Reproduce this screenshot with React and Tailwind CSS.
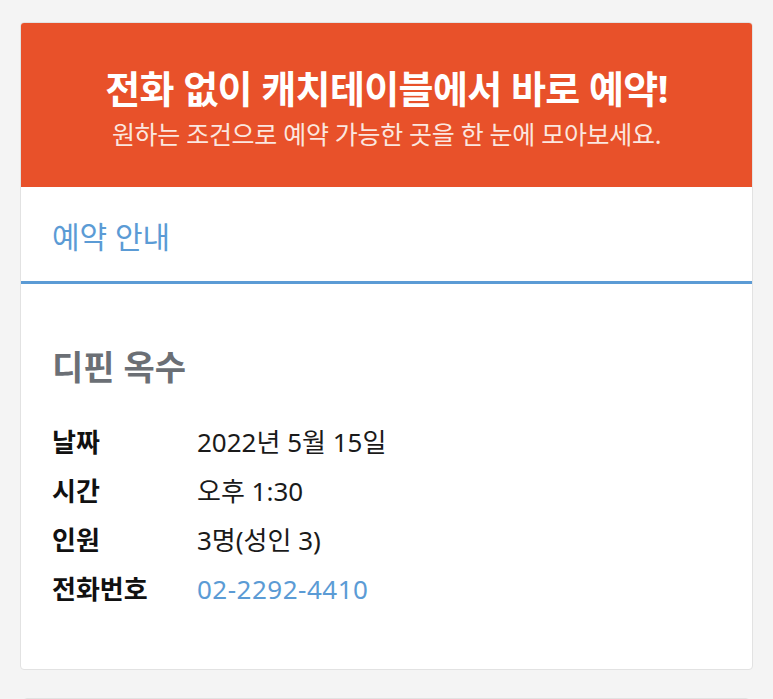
import React from 'react';

const rows = [
  { label: '날짜', value: '2022년 5월 15일' },
  { label: '시간', value: '오후 1:30' },
  { label: '인원', value: '3명(성인 3)' },
  { label: '전화번호', value: '02-2292-4410', link: true },
];

export default function App() {
  return (
    <main
      className="min-h-screen bg-[#f4f4f4] px-[20px] pt-[22px] pb-[28px]"
      style={{ fontFamily: '"Noto Sans", "Noto Sans CJK KR", sans-serif' }}
    >
      <section className="bg-white border border-[#e2e2e2] rounded-[4px] overflow-hidden">
        {/* 상단 배너 */}
        <div className="bg-[#e8512a] h-[164px] pt-[42px] flex flex-col items-center text-white">
          <h1 className="text-[38px] font-bold leading-[46px] tracking-[-0.6px]">
            전화 없이 캐치테이블에서 바로 예약!
          </h1>
          <p className="text-[25px] leading-[46px] text-[#fbe6df] tracking-[-0.3px]">
            원하는 조건으로 예약 가능한 곳을 한 눈에 모아보세요.
          </p>
        </div>

        {/* 탭 */}
        <div className="h-[97px] flex items-center px-[31px] pt-[4px] border-b-[3px] border-[#5b9bd5]">
          <span className="text-[30px] text-[#5b9bd5]">예약 안내</span>
        </div>

        {/* 예약 정보 */}
        <div className="px-[31px] pt-[60px] pb-[60px]">
          <h2 className="text-[34px] font-bold text-[#6b6f75] leading-[46px]">디핀 옥수</h2>
          <dl className="mt-[32px] flex flex-col gap-[9px]">
            {rows.map((r) => (
              <div key={r.label} className="flex items-center h-[40px]">
                <dt className="w-[145px] text-[26px] font-bold text-[#111]">{r.label}</dt>
                <dd className={`text-[26px] ${r.link ? 'text-[#5b9bd5] tracking-[0.5px]' : 'text-[#1a1a1a]'}`}>
                  {r.value}
                </dd>
              </div>
            ))}
          </dl>
        </div>
      </section>

      <div className="mt-[28px] mx-[3px] h-[40px] bg-white border border-[#e2e2e2] rounded-[4px]" />
    </main>
  );
}
